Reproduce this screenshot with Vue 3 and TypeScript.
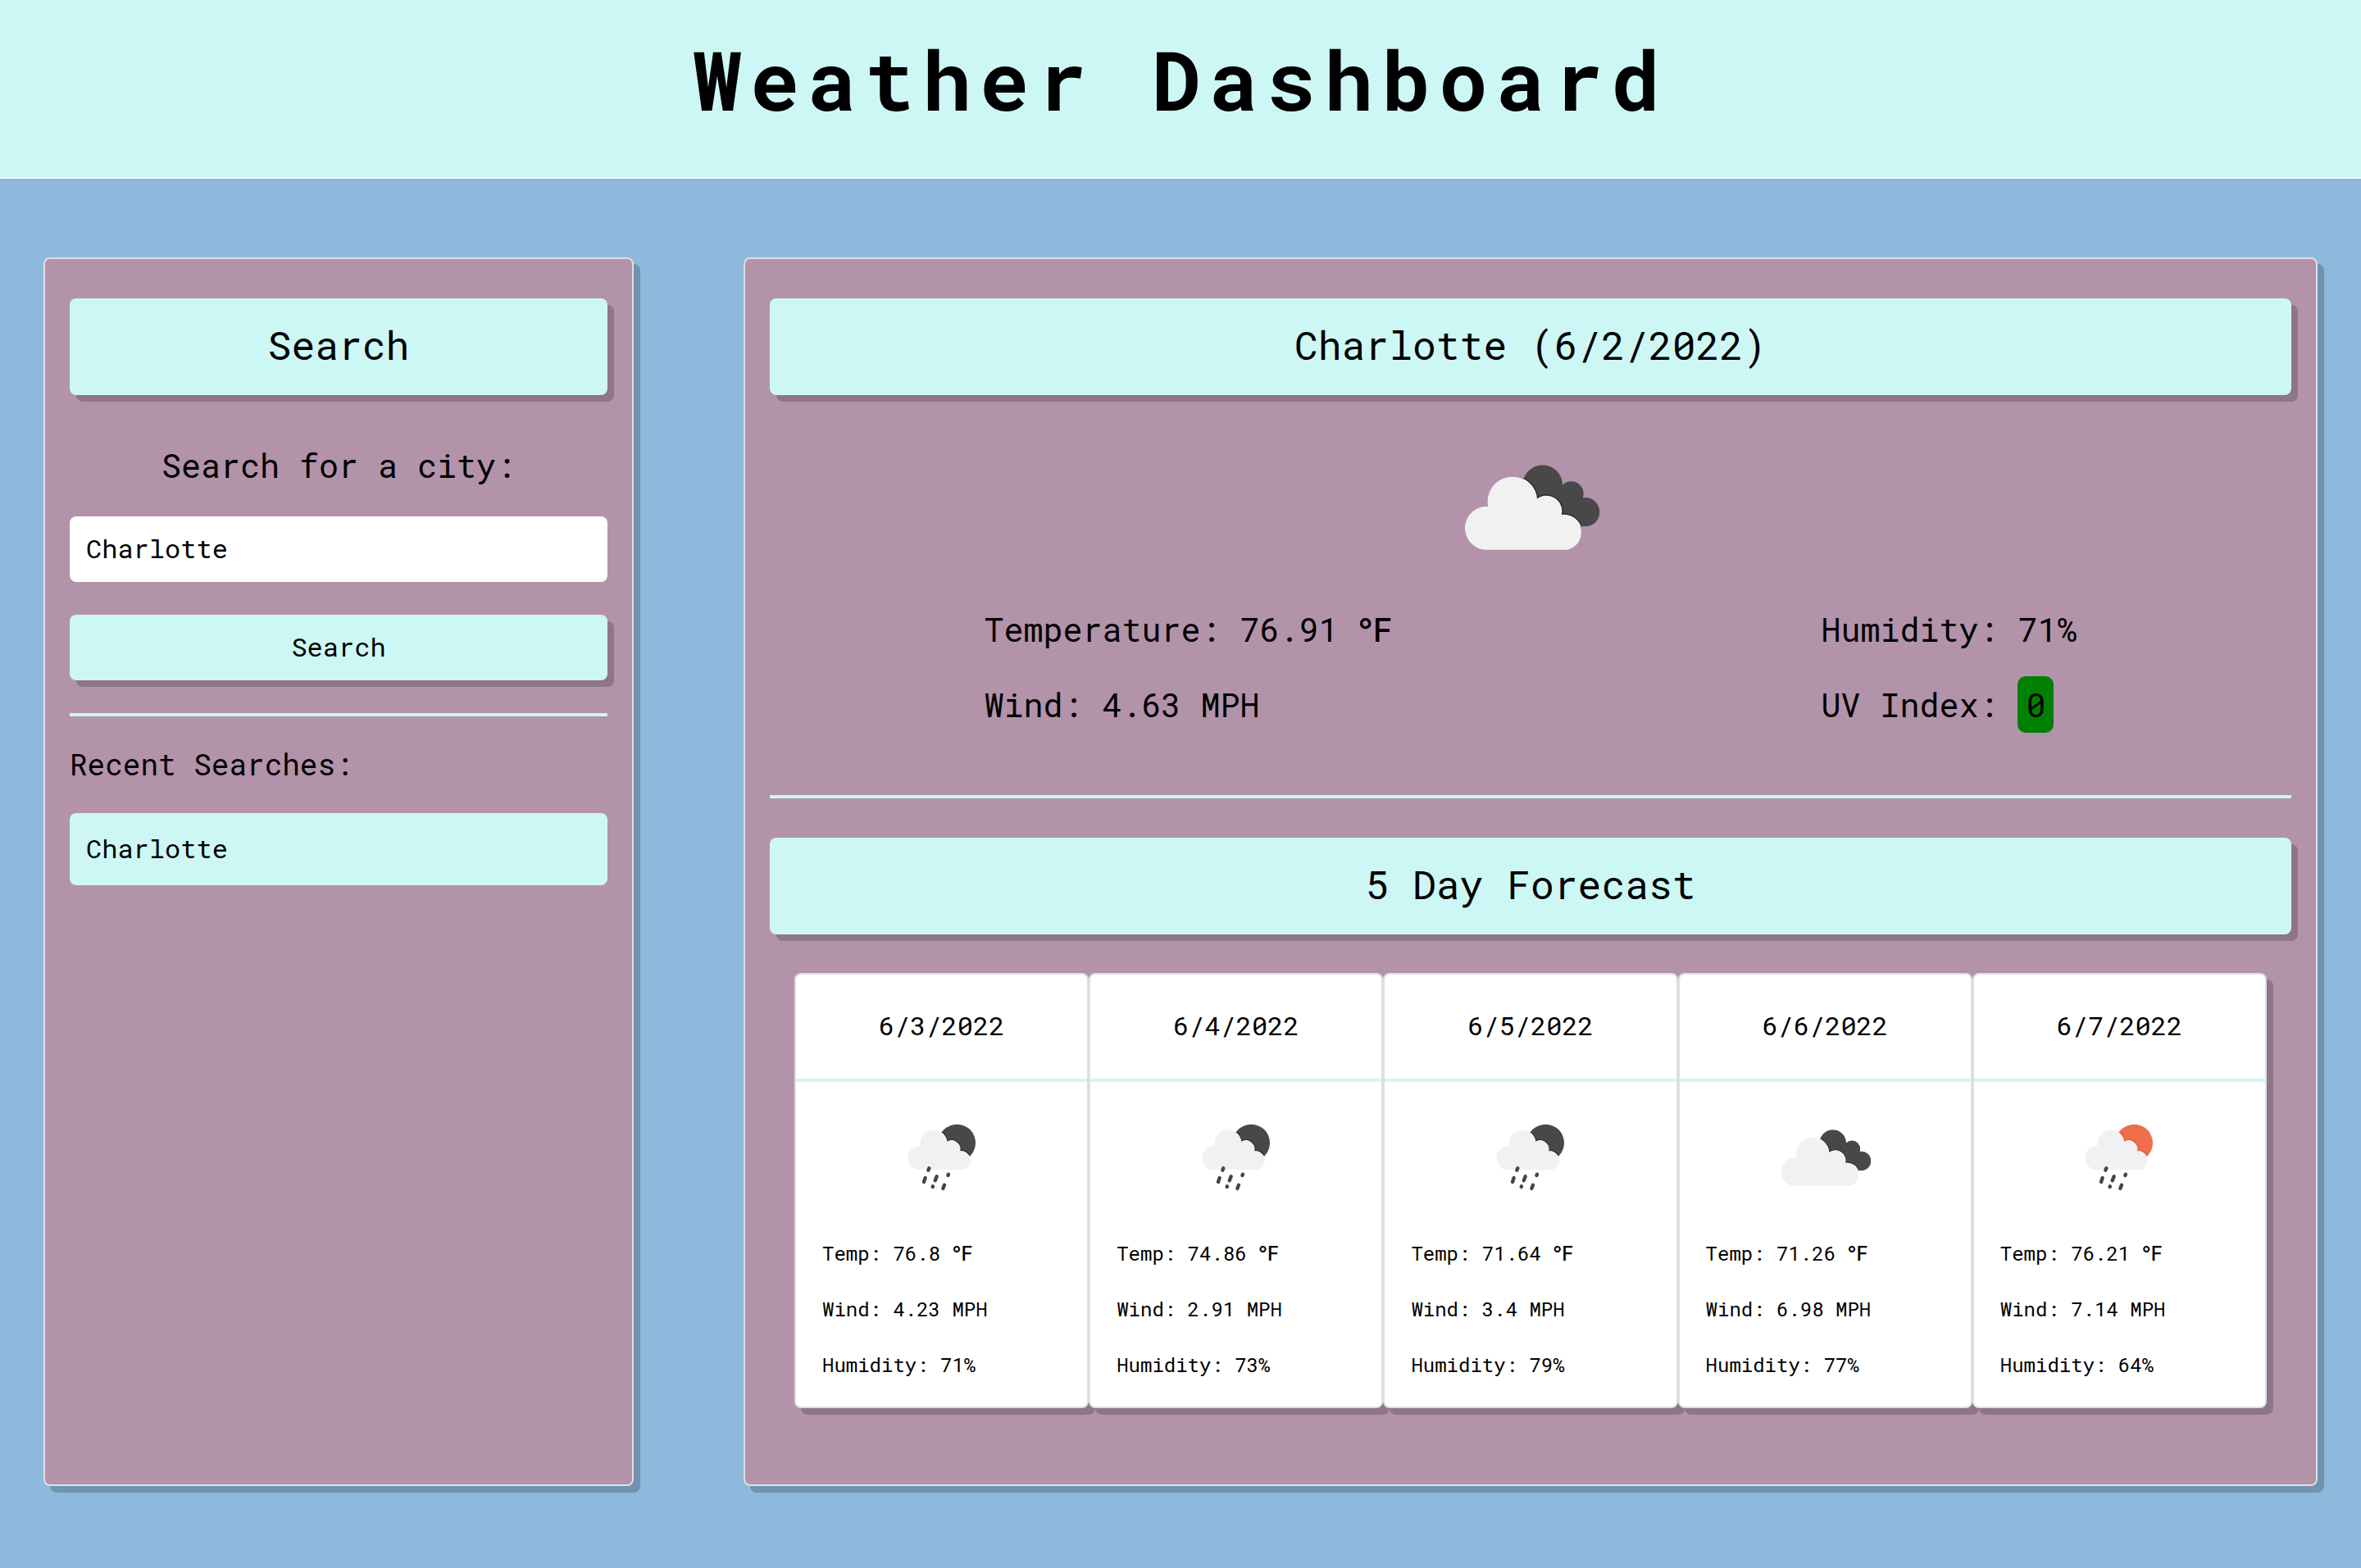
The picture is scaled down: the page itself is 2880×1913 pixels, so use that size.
<script setup lang="ts">
import { ref } from 'vue'

type Icon = 'clouds' | 'rain-night' | 'rain-day'

interface Day {
  date: string
  icon: Icon
  temp: string
  wind: string
  humidity: string
}

const city = ref('Charlotte')
const recent = ref<string[]>(['Charlotte'])

const forecast: Day[] = [
  { date: '6/3/2022', icon: 'rain-night', temp: '76.8', wind: '4.23', humidity: '71' },
  { date: '6/4/2022', icon: 'rain-night', temp: '74.86', wind: '2.91', humidity: '73' },
  { date: '6/5/2022', icon: 'rain-night', temp: '71.64', wind: '3.4', humidity: '79' },
  { date: '6/6/2022', icon: 'clouds', temp: '71.26', wind: '6.98', humidity: '77' },
  { date: '6/7/2022', icon: 'rain-day', temp: '76.21', wind: '7.14', humidity: '64' },
]

function search() {
  const name = city.value.trim()
  if (name && !recent.value.includes(name)) recent.value.unshift(name)
}
</script>

<template>
  <div class="page">
    <svg class="sprite" aria-hidden="true">
      <defs>
        <path id="front-cloud" d="M154 392A79 79 0 1 1 166 234A89.6 89.6 0 1 1 343 211A54 54 0 0 1 431 267A63 63 0 0 1 455 392Z" />
        <path id="rain-cloud" d="M123 232A44 44 0 0 1 128 144A48.6 48.6 0 1 1 224 130A31 31 0 0 1 271 164A34 34 0 0 1 281 232Z" />
        <circle id="disc" cx="261" cy="133" r="68" />
        <clipPath id="back-clip">
          <circle cx="365" cy="155" r="73" />
          <circle cx="470" cy="187" r="45" />
          <circle cx="521" cy="254" r="53" />
          <path d="M365 155L438 157L470 187L513 201L521 254V307H400Z" />
        </clipPath>
        <clipPath id="disc-clip"><use href="#disc" /></clipPath>
      </defs>
      <symbol id="clouds" viewBox="6 -45 630 540">
        <g clip-path="url(#back-clip)">
          <rect x="280" y="70" width="310" height="250" fill="#484849" />
          <use href="#front-cloud" stroke="#2c2c2e" stroke-width="14" />
          <use href="#front-cloud" stroke="#fbfbfb" stroke-width="5" />
        </g>
        <use href="#front-cloud" fill="#f1f1f0" />
      </symbol>
      <symbol id="rain-night" viewBox="-4 0 420 360">
        <use href="#disc" fill="#484849" />
        <g clip-path="url(#disc-clip)">
          <use href="#rain-cloud" stroke="#2c2c2e" stroke-width="9" />
          <use href="#rain-cloud" stroke="#fbfbfb" stroke-width="3" />
        </g>
        <use href="#rain-cloud" fill="#f1f1f1" />
        <path class="drops" d="M159 226L156 233M145 261L140 276M187 256L181 271M230 248L228 252M173 292L172 294M215 287L210 300" />
      </symbol>
      <symbol id="rain-day" viewBox="-4 0 420 360">
        <use href="#disc" fill="#ee6f4b" />
        <g clip-path="url(#disc-clip)">
          <use href="#rain-cloud" stroke="#e8502c" stroke-width="9" />
          <use href="#rain-cloud" stroke="#fbfbfb" stroke-width="3" />
        </g>
        <use href="#rain-cloud" fill="#f1f1f1" />
        <path class="drops" d="M159 226L156 233M145 261L140 276M187 256L181 271M230 248L228 252M173 292L172 294M215 287L210 300" />
      </symbol>
    </svg>

    <header class="masthead">
      <h1>Weather Dashboard</h1>
    </header>

    <main class="layout">
      <aside class="panel">
        <h2 class="banner">Search</h2>
        <form @submit.prevent="search">
          <label for="city">Search for a city:</label>
          <input id="city" v-model="city" type="text" />
          <button class="submit" type="submit">Search</button>
        </form>
        <hr />
        <h3 class="recent-title">Recent Searches:</h3>
        <ul class="recent">
          <li v-for="name in recent" :key="name">
            <button type="button" @click="city = name">{{ name }}</button>
          </li>
        </ul>
      </aside>

      <section class="panel main">
        <h2 class="banner">Charlotte (6/2/2022)</h2>
        <svg class="current-icon" role="img" aria-label="Broken clouds"><use href="#clouds" /></svg>
        <div class="current">
          <div class="column">
            <p>Temperature: 76.91 <span class="unit">℉</span></p>
            <p>Wind: 4.63 MPH</p>
          </div>
          <div class="column">
            <p>Humidity: 71%</p>
            <p>UV Index: <span class="uv">0</span></p>
          </div>
        </div>
        <hr />
        <h2 class="banner">5 Day Forecast</h2>
        <div class="forecast">
          <article v-for="day in forecast" :key="day.date" class="day">
            <h3>{{ day.date }}</h3>
            <svg class="day-icon" aria-hidden="true"><use :href="'#' + day.icon" /></svg>
            <div class="readings">
              <p>Temp: {{ day.temp }} <span class="unit">℉</span></p>
              <p>Wind: {{ day.wind }} MPH</p>
              <p>Humidity: {{ day.humidity }}%</p>
            </div>
          </article>
        </div>
      </section>
    </main>
  </div>
</template>

<style>
body {
  margin: 0;
  background: #8eb8dc;
}
</style>

<style scoped>
.page,
.page * {
  box-sizing: border-box;
}
.page {
  --mint: #cdf7f5;
  --mauve: #b293aa;
  --shadow: 8px 8px 0 rgba(0, 0, 0, 0.2);
  display: flex;
  flex-direction: column;
  min-height: 100vh;
  color: #000;
  background: #8eb8dc;
  font-family: "Roboto Mono", "Liberation Mono", monospace;
  font-weight: 400;
}
.sprite {
  position: absolute;
  width: 0;
  height: 0;
}
.drops {
  fill: none;
  stroke: #444446;
  stroke-width: 13;
  stroke-linecap: round;
}
h1, h2, h3, p, ul {
  margin: 0;
  padding: 0;
  font-weight: inherit;
}
.masthead {
  padding: 30px 0 54px;
  border-bottom: 2px solid #fff;
  background: var(--mint);
  text-align: center;
}
.masthead h1 {
  font-size: 100px;
  line-height: 132px;
  font-weight: 700;
  letter-spacing: 10px;
}
.layout {
  flex: 1;
  display: grid;
  grid-template-columns: minmax(0, 3fr) minmax(0, 8fr);
  gap: 134px;
  padding: 96px 53px 100px;
}
.panel {
  padding: 48px 30px 93px;
  border: 2px solid #dfe0e4;
  border-radius: 8px;
  background: var(--mauve);
  box-shadow: var(--shadow);
}
.banner {
  padding: 28px 0 32px;
  border-radius: 8px;
  background: var(--mint);
  box-shadow: var(--shadow);
  font-size: 48px;
  line-height: 58px;
  text-align: center;
}
form {
  display: flex;
  flex-direction: column;
  margin-top: 59px;
}
label {
  margin-bottom: 35px;
  font-size: 40px;
  line-height: 54px;
  text-align: center;
}
input,
button {
  width: 100%;
  height: 80px;
  padding: 0 20px 4px;
  border: 0;
  border-radius: 8px;
  color: #000;
  font-family: inherit;
  font-size: 32px;
  font-weight: inherit;
}
input {
  background: #fff;
}
button {
  background: var(--mint);
}
.submit {
  margin-top: 40px;
  box-shadow: var(--shadow);
}
hr {
  height: 4px;
  margin: 40px 0 34px;
  border: 0;
  background: var(--mint);
}
.recent-title {
  margin-bottom: 36px;
  font-size: 36px;
  line-height: 48px;
}
.recent {
  list-style: none;
}
.recent button {
  height: 88px;
  text-align: left;
}
.current-icon {
  display: block;
  width: 210px;
  height: 180px;
  margin: 43px auto 29px;
}
.current {
  display: flex;
  justify-content: space-around;
}
.column {
  display: flex;
  flex-direction: column;
  gap: 24px;
}
.column p {
  height: 68px;
  padding-top: 4px;
  font-size: 40px;
  line-height: 60px;
  white-space: nowrap;
}
.uv {
  padding: 8px 10px;
  border-radius: 10px;
  background: #008000;
}
.unit {
  font-family: Inter, "Noto Sans", sans-serif;
  font-weight: 500;
  line-height: 1;
}
.main hr {
  margin: 76px 0 48px;
}
.forecast {
  display: flex;
  margin: 47px 30px 0;
}
.day {
  flex: 1 1 0;
  min-width: 0;
  padding-bottom: 33px;
  border: 2px solid #dfdfdf;
  border-radius: 8px;
  background: #fff;
  box-shadow: var(--shadow);
}
.day h3 {
  padding: 41px 0 44px;
  border-bottom: 4px solid var(--mint);
  font-size: 32px;
  line-height: 42px;
  text-align: center;
}
.day-icon {
  display: block;
  width: 140px;
  height: 120px;
  margin: 30px auto 41px;
}
.readings {
  display: flex;
  flex-direction: column;
  gap: 32px;
  padding: 0 32px;
}
.readings p {
  font-size: 24px;
  line-height: 36px;
  white-space: nowrap;
}
</style>
